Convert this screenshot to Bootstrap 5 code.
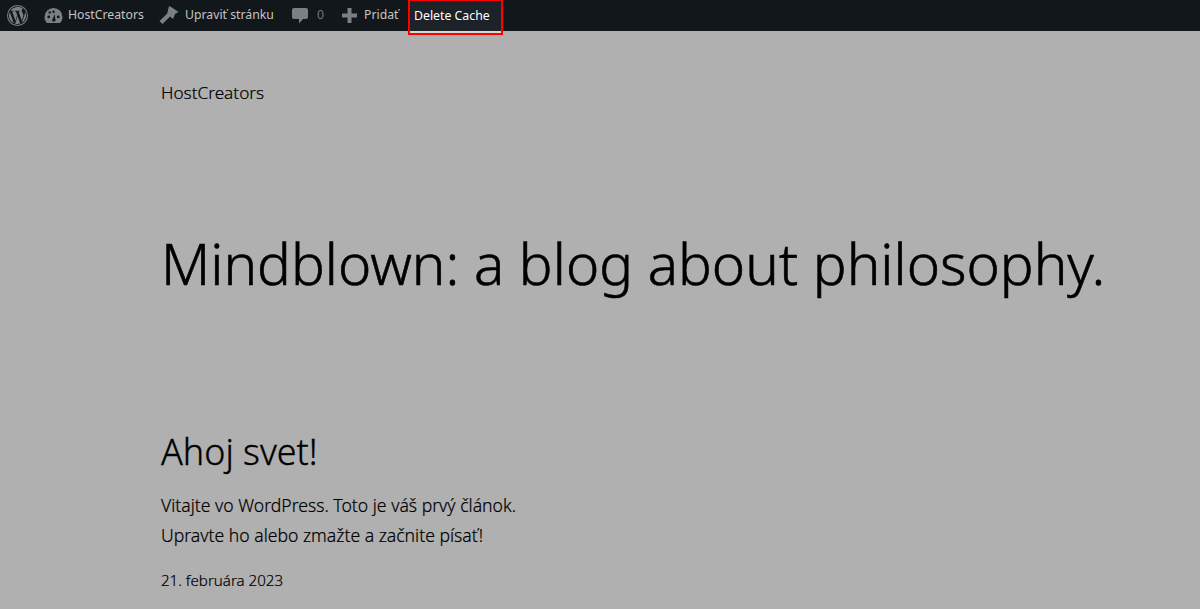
<!DOCTYPE html>
<html lang="sk"><head><meta charset="utf-8"><title>HostCreators</title>
<link href="https://cdn.jsdelivr.net/npm/bootstrap@5.3.0/dist/css/bootstrap.min.css" rel="stylesheet">
<style>
html,body{height:609px;overflow:hidden}
body{background:#b0b0b0;color:#000;font-family:"Noto Sans","Open Sans",sans-serif}
.wpbar{height:31px;background:#12171b;color:#c3c4c7;font-size:12.25px;padding-left:7px}
.wpbar svg{fill:#7c8084;display:block;flex:none}
.wpitem{height:31px;gap:6px}
.wi-logo{width:37px}
.wi-site{width:115px;gap:5px}
.wi-edit{width:133px}
.wi-comments{width:50px;gap:9px}
.wi-new{width:67px;gap:7px}
.wpdim{color:#72767a}
.cachebox{position:absolute;left:408px;top:0;width:95px;height:35px;border:2px solid #f00;border-top-width:1px;background:#d8d8d8;z-index:1}
.cachefill{height:30px;background:#1c2227;color:#fff;font-size:12.3px;padding-left:4px;padding-top:1px}
.pagewrap{padding:0 0 0 161px}
.sitename{font-size:17.2px;line-height:22px;margin-top:51px;font-weight:300;-webkit-text-stroke:.2px #000}
.herotitle{font-size:56.5px;font-weight:300;line-height:70px;margin-top:125px;white-space:nowrap;-webkit-text-stroke:.6px #000}
.posttitle{font-size:35.9px;font-weight:300;line-height:42px;margin-top:132px;-webkit-text-stroke:.35px #000}
.postbody{font-size:17.6px;line-height:30px;margin-top:17px;font-weight:300;-webkit-text-stroke:.2px #000}
.postdate{font-size:15.1px;line-height:20px;margin-top:20px;font-weight:300;-webkit-text-stroke:.2px #000}
</style></head><body>
<div class="wpbar d-flex align-items-center position-relative">
  <div class="wpitem wi-logo d-flex align-items-center"><svg width="21" height="21" viewBox="0 0 20 20"><path d="M10 0a10 10 0 1 0 0 20 10 10 0 0 0 0-20zm0 1a9 9 0 1 1 0 18 9 9 0 0 1 0-18zM1.900 10a8.100 8.100 0 0 0 4.600 7.300L2.600 6.700A8 8 0 0 0 1.900 10zm13.600-.4c0-1-.4-1.700-.7-2.200-.4-.7-.8-1.300-.8-2 0-.8.600-1.500 1.400-1.500h.1A8.100 8.100 0 0 0 3.200 5.500h.5c.8 0 2.200-.1 2.200-.1.400 0 .5.600 0 .7l-.9.100 3 8.900 1.800-5.400-1.300-3.500-.9-.1c-.4 0-.4-.7.100-.7 0 0 1.300.1 2.100.1s2.200-.1 2.200-.1c.4 0 .5.600 0 .7l-.9.100 3 8.800.8-2.800c.4-1 .6-1.800.6-2.500zm-5.400 1.100-2.400 7.100a8.100 8.100 0 0 0 5-.1l-.1-.1zm7-4.600.1.800c0 .8-.2 1.700-.6 2.900l-2.500 7.100A8.100 8.100 0 0 0 17.100 6.100z"/></svg></div>
  <div class="wpitem wi-site d-flex align-items-center"><svg width="19" height="17" viewBox="0 0 20 18"><path d="M10 1a9.500 9.500 0 0 0-9.500 9.500c0 2.500 1 4.700 2.500 6.500h14c1.500-1.800 2.500-4 2.500-6.500A9.500 9.500 0 0 0 10 1zM5 12a1.500 1.500 0 1 1 0-3 1.500 1.500 0 0 1 0 3zm1-5a1.300 1.300 0 1 1 0-2.600A1.300 1.300 0 0 1 6 7zm4-3.300a1.300 1.300 0 1 1 0 2.600 1.300 1.300 0 0 1 0-2.600zM10.500 15.500c-1 .2-1.800-.5-2-1.400-.1-.7.200-1.400.8-1.700L11 7.300l.9 5.500c.3.500.5 1 .3 1.400-.2.400-1 1.200-1.700 1.300zM15 12a1.500 1.500 0 1 1 0-3 1.500 1.500 0 0 1 0 3z"/></svg><span>HostCreators</span></div>
  <div class="wpitem wi-edit d-flex align-items-center"><svg width="20" height="20" viewBox="0 0 20 20"><path d="M10 0 13 1.500 19.500 6 16 8 14 13 11 10.500 3.500 18 .5 15 8.200 7.500z"/></svg><span>Upraviť stránku</span></div>
  <div class="wpitem wi-comments d-flex align-items-center"><svg width="16" height="17" viewBox="0 0 16 17"><path d="M2 1h12a2 2 0 0 1 2 2v7a2 2 0 0 1-2 2h-3l-4 4.500V12H2a2 2 0 0 1-2-2V3a2 2 0 0 1 2-2z"/></svg><span class="wpdim">0</span></div>
  <div class="wpitem wi-new d-flex align-items-center"><svg width="15" height="15" viewBox="0 0 15 15"><path d="M5.500 0h4v5.500H15v4H9.500V15h-4V9.500H0v-4h5.500z"/></svg><span>Pridať</span></div>
  <div class="cachebox"><div class="cachefill d-flex align-items-center">Delete Cache</div></div>
</div>
<main class="pagewrap">
  <div class="sitename">HostCreators</div>
  <h1 class="herotitle mb-0">Mindblown: a blog about philosophy.</h1>
  <h2 class="posttitle mb-0">Ahoj svet!</h2>
  <div class="postbody">Vitajte vo WordPress. Toto je váš prvý článok.<br>Upravte ho alebo zmažte a začnite písať!</div>
  <div class="postdate">21. februára 2023</div>
</main>
</body></html>
